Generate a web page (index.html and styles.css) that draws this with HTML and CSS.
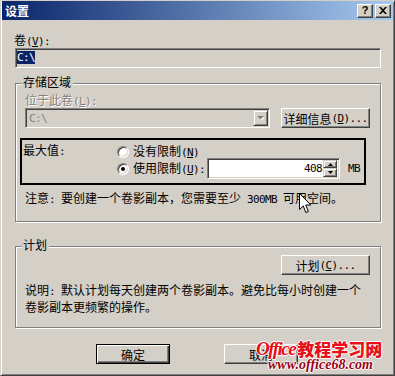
FILE: index.html
```html
<!DOCTYPE html>
<html>
<head>
<meta charset="utf-8">
<title>设置</title>
<link rel="stylesheet" href="styles.css">
</head>
<body>
<div class="dialog">
  <div class="titlebar">
    <span class="title">设置</span>
    <div class="tbtns">
      <span class="tbtn help">?</span>
      <span class="tbtn close"><svg width="8" height="7" viewBox="0 0 8 7"><path d="M0 0h2l2 2.3L6 0h2L5 3.5 8 7H6L4 4.7 2 7H0l3-3.5z" fill="#000"/></svg></span>
    </div>
  </div>
  <div class="content">
    <div class="line lbl-vol">卷<span class="a">(<u>V</u>):</span></div>
    <div class="field"><span class="sel a">C:\</span></div>

    <div class="group g1">
      <div class="legend">存储区域</div>
      <div class="line disabled lbl-loc">位于此卷<span class="a">(<u>L</u>):</span></div>
      <div class="row">
        <div class="combo">
          <span class="a ctext">C:\</span>
          <span class="cbtn"><svg width="7" height="5" viewBox="0 0 7 5"><path d="M1 1h7L4.5 4.5z" fill="#fff"/><path d="M0 0h7L3.5 3.5z" fill="#808080"/></svg></span>
        </div>
        <div class="btn wbtn">详细信息<span class="a">(<u>D</u>)...</span></div>
      </div>
      <div class="maxbox">
        <div class="line maxlabel">最大值<span class="a">:</span></div>
        <div class="opts">
          <div class="opt o1"><span class="radio"></span><span>没有限制<span class="a">(<u>N</u>)</span></span></div>
          <div class="opt o2"><span class="radio on"></span><span>使用限制<span class="a">(<u>U</u>):</span></span>
            <div class="spin">
              <span class="a val">408</span>
              <div class="sbtns">
                <span class="sb up"><svg width="5" height="3" viewBox="0 0 5 3"><path d="M2.5 0L5 3H0z" fill="#000"/></svg></span>
                <span class="sb down"><svg width="5" height="3" viewBox="0 0 5 3"><path d="M0 0h5L2.5 3z" fill="#000"/></svg></span>
              </div>
            </div>
            <span class="a mb">MB</span>
          </div>
        </div>
      </div>
      <div class="line note">注意<span class="a">: </span>要创建一个卷影副本，您需要至少<span class="a"> 300MB </span>可用空间。</div>
    </div>

    <div class="group g2">
      <div class="legend">计划</div>
      <div class="btn wbtn sched">计划<span class="a">(<u>C</u>)...</span></div>
      <div class="desc">说明<span class="a">: </span>默认计划每天创建两个卷影副本。避免比每小时创建一个<br>卷影副本更频繁的操作。</div>
    </div>

    <div class="actions">
      <div class="btn dbtn default">确定</div>
      <div class="btn dbtn">取消</div>
    </div>
  </div>

  <svg class="cursor" width="13" height="21" viewBox="0 0 13 21"><path d="M0.5 0.5V16.5L4.3 12.9L6.8 19.5L9.3 18.5L6.8 12H11.8Z" fill="#fff" stroke="#000" stroke-width="1"/></svg>

  <div class="wm">
    <div class="wm1"><span class="wmo">Office</span><span class="wmc">教程学习网</span></div>
    <div class="wm2">www.office68.com</div>
  </div>
</div>
</body>
</html>
```

FILE: styles.css
```css
html, body {
  margin: 0;
  padding: 0;
  background: #d4d0c8;
}

body {
  font-family: "Noto Sans CJK SC", "Noto Sans", sans-serif;
  font-size: 12px;
  color: #000;
}

.a {
  font-family: "DejaVu Sans Mono", "Liberation Mono", monospace;
  font-size: 11px;
  letter-spacing: -0.62px;
}

u {
  text-decoration: underline;
  text-underline-offset: 1px;
}

.dialog {
  position: relative;
  width: 395px;
  height: 376px;
  box-sizing: border-box;
  border: 1px solid;
  border-color: #d4d0c8 #404040 #404040 #d4d0c8;
  box-shadow: inset 1px 1px 0 #fff, inset -1px -1px 0 #808080;
  padding: 0 1px;
  overflow: hidden;
}

.titlebar {
  height: 19px;
  display: flex;
  align-items: center;
  justify-content: space-between;
  padding: 0 2px 0 3px;
  background: linear-gradient(to right, #0a246a 0%, #a6caf0 100%);
}

.title {
  color: #fff;
  font-weight: bold;
  font-size: 12px;
  line-height: 19px;
}

.tbtns {
  display: flex;
  gap: 2px;
}

.tbtn {
  width: 16px;
  height: 14px;
  box-sizing: border-box;
  background: #d4d0c8;
  border: 1px solid;
  border-color: #fff #404040 #404040 #fff;
  box-shadow: inset -1px -1px 0 #808080;
  display: flex;
  align-items: center;
  justify-content: center;
}

.help {
  font-family: "Liberation Sans", sans-serif;
  font-weight: bold;
  font-size: 11px;
  line-height: 12px;
  padding-bottom: 1px;
}

.close svg {
  margin-bottom: 1px;
}

.content {
  padding: 0 12px 0 13px;
}

.line {
  height: 13px;
  line-height: 13px;
  white-space: nowrap;
}

.lbl-vol {
  margin-top: 13px;
  margin-left: -1px;
}

.field {
  margin-top: 2px;
  height: 20px;
  box-sizing: border-box;
  border: 1px solid;
  border-color: #808080 #fff #fff #808080;
  box-shadow: inset 1px 1px 0 #404040, inset -1px -1px 0 #d4d0c8;
  padding: 2px 2px 0 1px;
}

.sel {
  display: inline-block;
  height: 13px;
  line-height: 13px;
  background: #0a246a;
  color: #fff;
  vertical-align: top;
}

.group {
  border: 1px solid #808080;
  box-shadow: inset 1px 1px 0 #fff, 1px 1px 0 #fff;
  padding: 0 10px 17px 9px;
}

.g1 {
  margin-top: 15px;
}

.g2 {
  margin-top: 24px;
  padding-bottom: 13px;
}

.legend {
  width: fit-content;
  height: 13px;
  line-height: 13px;
  margin: -9px 0 0 -3px;
  padding: 0 2px 0 1px;
  background: #d4d0c8;
}

.disabled {
  color: #808080;
  text-shadow: 1px 1px 0 #fff;
}

.lbl-loc {
  margin-top: 5px;
}

.row {
  margin-top: 2px;
  display: flex;
  justify-content: space-between;
  height: 20px;
}

.combo {
  width: 245px;
  height: 20px;
  box-sizing: border-box;
  border: 1px solid;
  border-color: #808080 #fff #fff #808080;
  box-shadow: inset 1px 1px 0 #404040, inset -1px -1px 0 #d4d0c8;
  padding: 1px;
  display: flex;
  align-items: center;
  justify-content: space-between;
}

.ctext {
  color: #808080;
  padding-left: 2px;
  line-height: 13px;
}

.cbtn {
  width: 15px;
  height: 16px;
  box-sizing: border-box;
  background: #d4d0c8;
  border: 1px solid;
  border-color: #d4d0c8 #404040 #404040 #d4d0c8;
  box-shadow: inset 1px 1px 0 #fff, inset -1px -1px 0 #808080;
  display: flex;
  align-items: center;
  justify-content: center;
}

.btn {
  height: 20px;
  box-sizing: border-box;
  background: #d4d0c8;
  border: 1px solid;
  border-color: #fff #404040 #404040 #fff;
  box-shadow: inset -1px -1px 0 #808080;
  display: flex;
  align-items: center;
  justify-content: center;
  line-height: 13px;
  white-space: nowrap;
}

.wbtn {
  width: 89px;
}

.maxbox {
  margin: 10px 0 0 -5px;
  width: 346px;
  height: 47px;
  box-sizing: border-box;
  border: 2px solid #000;
  padding: 0 0 0 1px;
  display: flex;
}

.maxlabel {
  width: 94px;
  margin-top: 3px;
}

.opts {
  display: flex;
  flex-direction: column;
}

.opt {
  display: flex;
  align-items: center;
  white-space: nowrap;
  line-height: 13px;
}

.o1 {
  margin-top: 5px;
  height: 13px;
}

.o2 {
  height: 21px;
}

.radio {
  position: relative;
  width: 12px;
  height: 12px;
  box-sizing: border-box;
  border-radius: 50%;
  background: #fff;
  border: 1px solid;
  border-color: #808080 #fff #fff #808080;
  box-shadow: inset 1px 1px 0 #404040, inset -1px -1px 0 #d4d0c8;
  margin-right: 4px;
  flex: none;
}

.radio.on::after {
  content: "";
  position: absolute;
  left: 3px;
  top: 3px;
  width: 4px;
  height: 4px;
  border-radius: 50%;
  background: #000;
}

.spin {
  margin-left: 2px;
  width: 133px;
  height: 21px;
  box-sizing: border-box;
  border: 1px solid;
  border-color: #808080 #fff #fff #808080;
  box-shadow: inset 1px 1px 0 #404040, inset -1px -1px 0 #d4d0c8;
  background: #fff;
  padding: 2px;
  display: flex;
  justify-content: flex-end;
  align-items: center;
}

.val {
  margin-right: 1px;
  line-height: 13px;
}

.sbtns {
  display: flex;
  flex-direction: column;
  width: 14px;
  height: 17px;
}

.sb {
  box-sizing: border-box;
  background: #d4d0c8;
  border: 1px solid;
  border-color: #d4d0c8 #404040 #404040 #d4d0c8;
  box-shadow: inset 1px 1px 0 #fff, inset -1px -1px 0 #808080;
  display: flex;
  align-items: center;
  justify-content: center;
}

.sb.up {
  height: 8px;
}

.sb.down {
  height: 9px;
}

.mb {
  margin-left: 8px;
}

.note {
  margin-top: 6px;
}

.sched {
  margin: 4px 0 0 auto;
}

.desc {
  margin-top: 7px;
  line-height: 15px;
  white-space: nowrap;
}

.actions {
  display: flex;
  gap: 54px;
  margin: 16px 0 0 81px;
}

.dbtn {
  width: 74px;
}

.default {
  border: 1px solid #000;
  box-shadow: inset 1px 1px 0 #fff, inset -1px -1px 0 #404040, inset -2px -2px 0 #808080;
}

.cursor {
  position: absolute;
  left: 298px;
  top: 192px;
}

.wm {
  position: absolute;
  left: 255px;
  top: 338px;
  white-space: nowrap;
}

.wm1 {
  height: 20px;
  display: flex;
  align-items: flex-end;
}

.wmo {
  font-family: "Liberation Serif", serif;
  font-style: italic;
  font-weight: bold;
  font-size: 19px;
  letter-spacing: -1.5px;
  line-height: 20px;
  color: #e8101a;
  text-shadow: 1px 0 0 #fff, -1px 0 0 #fff, 0 1px 0 #fff, 0 -1px 0 #fff;
}

.wmc {
  margin-left: 2px;
  font-family: "Noto Sans CJK SC", sans-serif;
  font-weight: 900;
  font-size: 17px;
  line-height: 20px;
  color: #e8101a;
  text-shadow: 1px 0 0 #fff, -1px 0 0 #fff, 0 1px 0 #fff, 0 -1px 0 #fff;
}

.wm2 {
  margin-left: 12px;
  font-family: "Liberation Serif", serif;
  font-style: italic;
  font-weight: bold;
  font-size: 14px;
  line-height: 12px;
  color: #9a0014;
  text-shadow: 1px 0 0 #fff, -1px 0 0 #fff, 0 1px 0 #fff, 0 -1px 0 #fff;
}
```
